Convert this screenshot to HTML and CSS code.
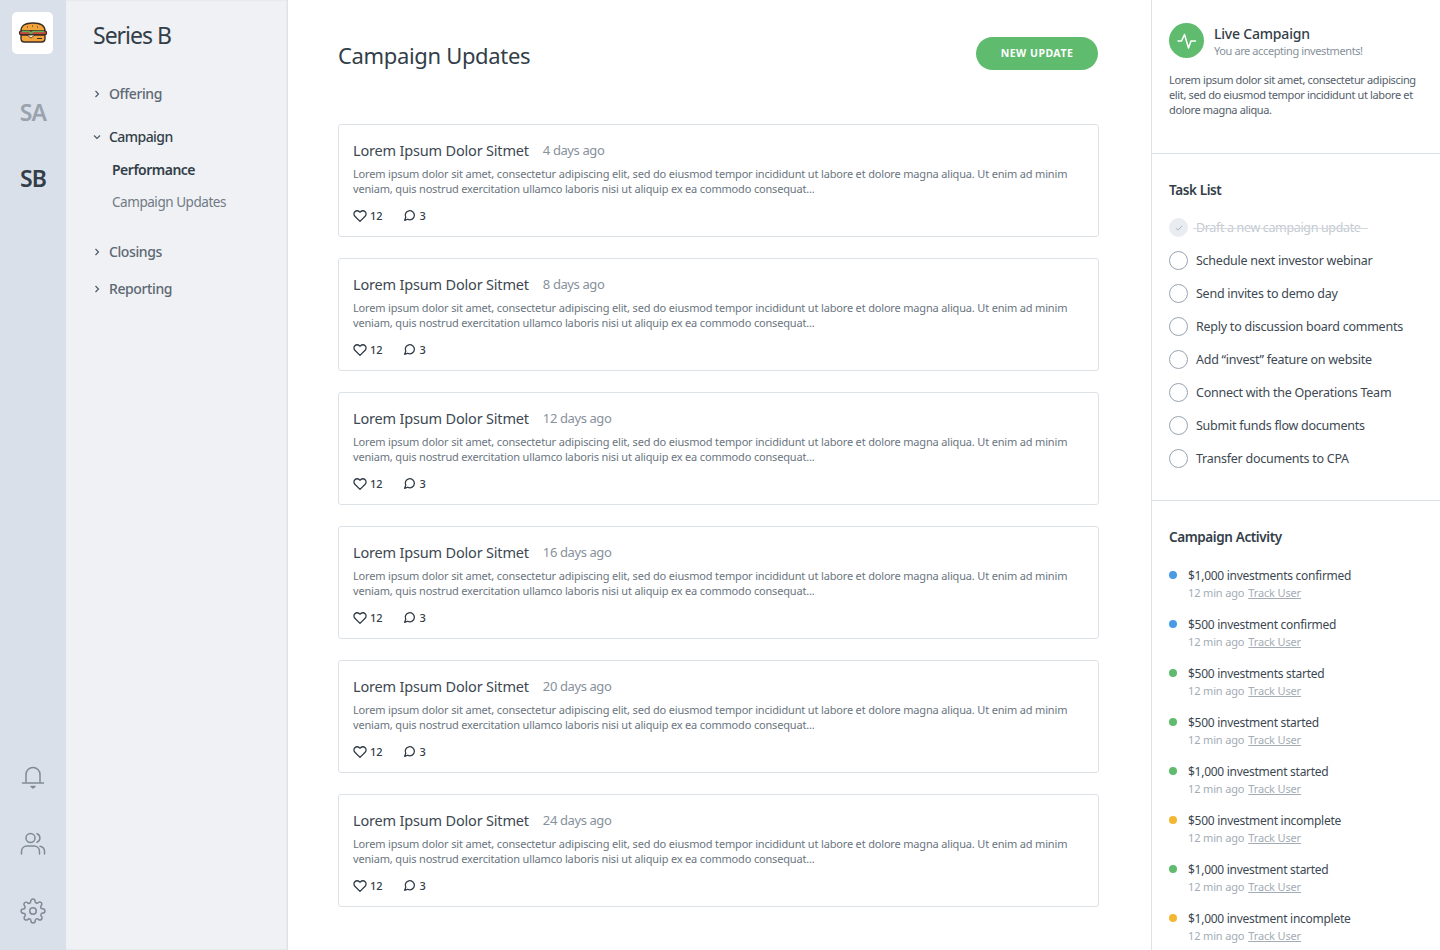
FILE: index.html
```html
<!DOCTYPE html>
<html lang="en">
<head>
  <meta charset="UTF-8">
  <title>Campaign Updates</title>
  <link rel="stylesheet" href="styles.css">
</head>
<body>
  <div class="app">
    <!-- company rail -->
    <nav class="rail">
      <div class="logo">
        <svg width="30" height="24" viewBox="0 0 30 24">
          <path d="M3 10C3 4 8 2 15 2s12 2 12 8z" fill="#f2a33a" stroke="#3d2c25" stroke-width="1.4"/>
          <rect x="1.5" y="10" width="27" height="3.6" rx="1.4" fill="#c8443c" stroke="#3d2c25" stroke-width="1.2"/>
          <path d="M4 10.5h7l2 2 2-2h11" fill="none" stroke="#5fae55" stroke-width="1.6"/>
          <path d="M3 14h24v3.5c0 2-1.500 3.500-3.500 3.500h-17C4.500 21 3 19.500 3 17.500z" fill="#f2a33a" stroke="#3d2c25" stroke-width="1.400"/>
          <path d="M9 14l4 3 4-3z" fill="#fff3d0" stroke="#3d2c25" stroke-width=".8"/>
          <path d="M19 17.500h5" stroke="#3d2c25" stroke-width="1"/>
          <path d="M9 6h1M14 5h1M19 6h1" stroke="#3d2c25" stroke-width="1"/>
        </svg>
      </div>
      <a class="rail-link muted">SA</a>
      <a class="rail-link">SB</a>
      <div class="rail-icons">
        <svg width="26" height="26" viewBox="0 0 26 26" fill="none" stroke="#7f8a96" stroke-width="1.500" stroke-linecap="round" stroke-linejoin="round">
          <path d="M6 18V10.500a7 7 0 0 1 14 0V18"/>
          <path d="M2.500 19h21"/>
          <path d="M11 22.500h4l-2 1.500z" fill="#7f8a96"/>
        </svg>
        <svg width="26" height="26" viewBox="0 0 26 26" fill="none" stroke="#7f8a96" stroke-width="1.500" stroke-linecap="round" stroke-linejoin="round">
          <circle cx="10.500" cy="7" r="4.500"/>
          <path d="M1.500 23v-2.500c0-3.500 2.500-5.500 5.500-5.500h7c3 0 5.500 2 5.500 5.500V23"/>
          <path d="M17 2.800a4.500 4.500 0 0 1 0 8.400"/>
          <path d="M20 15.300c2.800.6 4.500 2.500 4.500 5.200V23"/>
        </svg>
        <svg width="26" height="26" viewBox="0 0 24 24" fill="none" stroke="#7f8a96" stroke-width="1.400" stroke-linecap="round" stroke-linejoin="round">
          <circle cx="12" cy="12" r="3"/>
          <path d="M19.400 15a1.650 1.650 0 0 0 .33 1.820l.06.06a2 2 0 1 1-2.830 2.830l-.06-.06a1.650 1.650 0 0 0-2.800 1.170V21a2 2 0 0 1-4 0v-.09a1.650 1.650 0 0 0-2.800-1.170l-.06.06a2 2 0 1 1-2.830-2.830l.06-.06a1.650 1.650 0 0 0-1.170-2.800H3a2 2 0 0 1 0-4h.09a1.650 1.650 0 0 0 1.170-2.800l-.06-.06a2 2 0 1 1 2.830-2.830l.06.06a1.650 1.650 0 0 0 2.800-1.170V3a2 2 0 0 1 4 0v.09a1.650 1.650 0 0 0 2.800 1.170l.06-.06a2 2 0 1 1 2.830 2.830l-.06.06a1.650 1.650 0 0 0 1.170 2.800H21a2 2 0 0 1 0 4h-.09a1.650 1.650 0 0 0-1.510 1.110z"/>
        </svg>
      </div>
    </nav>

    <!-- section nav -->
    <aside class="sidenav">
      <h2 class="sidenav-title">Series B</h2>
      <div class="nav-item nav-offering"><svg class="chev" viewBox="0 0 8 8"><path d="M2.500 1l3 3-3 3"/></svg>Offering</div>
      <div class="nav-item nav-campaign active"><svg class="chev" viewBox="0 0 8 8"><path d="M1 2.500l3 3 3-3"/></svg>Campaign</div>
      <div class="nav-sub current">Performance</div>
      <div class="nav-sub">Campaign Updates</div>
      <div class="nav-item nav-closings"><svg class="chev" viewBox="0 0 8 8"><path d="M2.500 1l3 3-3 3"/></svg>Closings</div>
      <div class="nav-item nav-reporting"><svg class="chev" viewBox="0 0 8 8"><path d="M2.500 1l3 3-3 3"/></svg>Reporting</div>
    </aside>

    <main class="content">
      <header class="content-head">
        <h1>Campaign Updates</h1>
        <button class="new-btn">NEW UPDATE</button>
      </header>
      <div class="updates" id="updates"></div>
    </main>

    <aside class="panel">
      <section class="live">
        <div class="live-head">
          <div class="live-icon">
            <svg width="22" height="22" viewBox="0 0 22 22" fill="none" stroke="#fff" stroke-width="1.500" stroke-linecap="round" stroke-linejoin="round"><path d="M2 11h3.500l3-6.500 4 13.500 2.500-7h4.500"/></svg>
          </div>
          <div>
            <div class="live-title">Live Campaign</div>
            <div class="live-sub">You are accepting investments!</div>
          </div>
        </div>
        <p class="live-text">Lorem ipsum dolor sit amet, consectetur adipiscing elit, sed do eiusmod tempor incididunt ut labore et dolore magna aliqua.</p>
      </section>
      <section class="tasks">
        <h3>Task List</h3>
        <ul class="task-list" id="tasks"></ul>
      </section>
      <section class="activity">
        <h3>Campaign Activity</h3>
        <ul class="activity-list" id="activity"></ul>
      </section>
    </aside>
  </div>

  <script>
    const heart = '<svg width="14" height="14" viewBox="0 0 24 24" fill="none" stroke="#2f3a45" stroke-width="2.200" stroke-linejoin="round"><path d="M20.800 4.600a5.500 5.500 0 0 0-7.800 0L12 5.700l-1-1.100a5.500 5.500 0 0 0-7.800 7.800L12 21.200l8.800-8.800a5.500 5.500 0 0 0 0-7.800z"/></svg>';
    const bubble = '<svg class="bubble" width="13" height="13" viewBox="0 0 24 24" fill="none" stroke="#2f3a45" stroke-width="2.400" stroke-linejoin="round"><path d="M21 11.500a8.400 8.400 0 0 1-12.300 7.400L3 21l2.100-5.700A8.400 8.400 0 1 1 21 11.500z"/></svg>';

    const updates = document.getElementById('updates');
    [4, 8, 12, 16, 20, 24].forEach(days => {
      updates.innerHTML += `
        <article class="card">
          <div class="card-head"><span class="card-title">Lorem Ipsum Dolor Sitmet</span><span class="card-age">${days} days ago</span></div>
          <p class="card-text">Lorem ipsum dolor sit amet, consectetur adipiscing elit, sed do eiusmod tempor incididunt ut labore et dolore magna aliqua. Ut enim ad minim veniam, quis nostrud exercitation ullamco laboris nisi ut aliquip ex ea commodo consequat...</p>
          <div class="card-meta"><span class="meta">${heart}12</span><span class="meta">${bubble}3</span></div>
        </article>`;
    });

    const tasks = document.getElementById('tasks');
    tasks.innerHTML = '<li class="task done"><span class="check"><svg width="10" height="10" viewBox="0 0 10 10" fill="none" stroke="#a9b4c0" stroke-width="1"><path d="M2 5.200l2 2 4-4.400"/></svg></span><span class="task-label">Draft a new campaign update</span></li>';
    ['Schedule next investor webinar', 'Send invites to demo day', 'Reply to discussion board comments',
     'Add “invest” feature on website', 'Connect with the Operations Team', 'Submit funds flow documents',
     'Transfer documents to CPA'].forEach(t => {
      tasks.innerHTML += `<li class="task"><span class="check"></span><span class="task-label">${t}</span></li>`;
    });

    const activity = document.getElementById('activity');
    [['$1,000 investments confirmed', 'blue'], ['$500 investment confirmed', 'blue'], ['$500 investments started', 'green'],
     ['$500 investment started', 'green'], ['$1,000 investment started', 'green'], ['$500 investment incomplete', 'yellow'],
     ['$1,000 investment started', 'green'], ['$1,000 investment incomplete', 'yellow']].forEach(([t, c]) => {
      activity.innerHTML += `<li class="act"><span class="dot ${c}"></span><div><div class="act-title">${t}</div><div class="act-meta">12 min ago<a>Track User</a></div></div></li>`;
    });
  </script>
</body>
</html>
```
FILE: styles.css
```css
html, body {
  margin: 0;
  padding: 0;
  height: 950px;
  overflow: hidden;
}
body {
  font-family: 'Noto Sans', sans-serif;
  color: #333e48;
  background: #fff;
}
h1, h2, h3, p, ul {
  margin: 0;
  padding: 0;
}
ul {
  list-style: none;
}
.app {
  display: flex;
  height: 950px;
}

/* Company rail */
.rail {
  width: 66px;
  flex: none;
  background: #d9e0e9;
  display: flex;
  flex-direction: column;
  align-items: center;
  padding-top: 12px;
  box-sizing: border-box;
}
.logo {
  width: 41px;
  height: 42px;
  background: #fff;
  border-radius: 5px;
  display: flex;
  align-items: center;
  justify-content: center;
  margin: 0 1px 42px 0;
}
.rail-link {
  font-size: 23px;
  font-weight: 600;
  line-height: 32px;
  height: 66px;
  letter-spacing: -0.9px;
  color: #333e48;
}
.rail-link.muted {
  color: #99a2ad;
}
.rail-icons {
  margin-top: auto;
  display: flex;
  flex-direction: column;
  gap: 41px;
  padding-bottom: 26px;
}
.rail-icons svg {
  display: block;
}

/* Section nav */
.sidenav {
  width: 222px;
  flex: none;
  background: #eff1f4;
  box-sizing: border-box;
  padding: 19px 0 0 27px;
  box-shadow: inset -1px 0 2px rgba(120, 130, 145, 0.18);
}
.sidenav-title {
  font-size: 23px;
  font-weight: 400;
  line-height: 32px;
  letter-spacing: -1px;
  color: #333e48;
  margin-bottom: 33px;
}
.nav-item {
  display: flex;
  align-items: center;
  font-size: 14px;
  font-weight: 500;
  line-height: 20px;
  color: #5d6873;
  letter-spacing: -0.4px;
}
.nav-item.active {
  color: #333e48;
  letter-spacing: -0.55px;
}
.chev {
  width: 8px;
  height: 8px;
  margin-right: 8px;
  fill: none;
  stroke: #4a5560;
  stroke-width: 1.100;
}
.nav-campaign {
  margin-top: 23px;
}
.nav-sub {
  margin: 12px 0 0 19px;
  font-size: 13.500px;
  line-height: 20px;
  letter-spacing: -0.45px;
  color: #6f7a85;
}
.nav-sub.current {
  margin-top: 13px;
  font-size: 14px;
  font-weight: 600;
  letter-spacing: -0.5px;
  color: #333e48;
}
.nav-closings {
  margin-top: 30px;
}
.nav-reporting {
  margin-top: 17px;
}

/* Main column */
.content {
  width: 863px;
  flex: none;
  box-sizing: border-box;
  padding: 37px 52px 0 50px;
}
.content-head {
  display: flex;
  justify-content: space-between;
  align-items: flex-start;
  height: 87px;
}
.content-head h1 {
  font-size: 22px;
  font-weight: 400;
  line-height: 36px;
  letter-spacing: -0.34px;
  color: #333e48;
}
.new-btn {
  width: 122px;
  height: 33px;
  margin-right: 1px;
  padding: 0 0 2px;
  border: none;
  border-radius: 17px;
  background: #5fbb6e;
  color: #fff;
  font-family: inherit;
  font-size: 10.500px;
  font-weight: 700;
  letter-spacing: 0.5px;
}
.updates {
  display: flex;
  flex-direction: column;
  gap: 21px;
}
.card {
  height: 113px;
  box-sizing: border-box;
  border: 1px solid #dde2e7;
  border-radius: 3px;
  padding: 13px 14px 0;
}
.card-head {
  display: flex;
  align-items: center;
  gap: 14px;
  line-height: 24px;
}
.card-title {
  font-size: 14.500px;
  letter-spacing: -0.18px;
  color: #3d4852;
}
.card-age {
  font-size: 13px;
  letter-spacing: -0.4px;
  color: #87919b;
}
.card-text {
  font-size: 11px;
  line-height: 15px;
  letter-spacing: -0.17px;
  color: #6b7580;
  margin-top: 4px;
}
.card-meta {
  display: flex;
  gap: 20px;
  margin-top: 12px;
}
.meta {
  display: flex;
  align-items: center;
  gap: 3px;
  font-size: 11px;
  font-weight: 500;
  line-height: 15px;
  color: #333e48;
}
.bubble {
  margin-right: 1px;
}

/* Right panel */
.panel {
  width: 289px;
  flex: none;
  border-left: 1px solid #dde2e7;
  box-sizing: border-box;
  overflow: hidden;
}
.panel section {
  border-bottom: 1px solid #dde2e7;
  padding: 0 17px;
}
.panel h3 {
  font-size: 13.500px;
  font-weight: 600;
  line-height: 20px;
  letter-spacing: -0.39px;
  color: #333e48;
}
.live {
  height: 154px;
  box-sizing: border-box;
  padding-top: 23px !important;
}
.live-head {
  display: flex;
  gap: 10px;
}
.live-icon {
  width: 35px;
  height: 35px;
  border-radius: 50%;
  background: #5fbb6e;
  display: flex;
  align-items: center;
  justify-content: center;
}
.live-title {
  padding-top: 1px;
  font-size: 14px;
  font-weight: 500;
  line-height: 19px;
  letter-spacing: -0.2px;
}
.live-sub {
  font-size: 11px;
  line-height: 15px;
  letter-spacing: -0.4px;
  color: #87919b;
}
.live-text {
  font-size: 11px;
  line-height: 15px;
  letter-spacing: -0.36px;
  color: #55606b;
  margin-top: 14px;
}
.tasks {
  height: 347px;
  box-sizing: border-box;
  padding-top: 26px !important;
}
.task-list {
  margin-top: 11px;
}
.task {
  display: flex;
  align-items: center;
  height: 33px;
  font-size: 12.500px;
  letter-spacing: -0.25px;
  color: #3d4852;
}
.check {
  width: 19px;
  height: 19px;
  box-sizing: border-box;
  border: 1px solid #98a3b0;
  border-radius: 50%;
  margin-right: 8px;
  flex: none;
  display: flex;
  align-items: center;
  justify-content: center;
}
.task.done .check {
  border-color: #e9edf2;
  background: #e9edf2;
}
.task.done .task-label {
  position: relative;
  color: #c3cad1;
  letter-spacing: -0.35px;
}
/* strike runs a little past the text */
.task.done .task-label::after {
  content: "";
  position: absolute;
  left: -3px;
  right: -7px;
  top: 50%;
  height: 1px;
  background: #d3d9df;
}
.activity {
  border-bottom: none !important;
  padding-top: 26px !important;
}
.activity-list {
  margin-top: 20px;
}
.act {
  display: flex;
  height: 49px;
  font-size: 12px;
  letter-spacing: -0.27px;
}
.dot {
  width: 8px;
  height: 8px;
  border-radius: 50%;
  margin: 4px 11px 0 0;
  flex: none;
}
.dot.blue { background: #4b9be4; }
.dot.green { background: #5fbb6e; }
.dot.yellow { background: #f5b731; }
.act-title {
  line-height: 18px;
  color: #3d4852;
}
.act-meta {
  margin-top: -1px;
  font-size: 11px;
  line-height: 18px;
  letter-spacing: -0.15px;
  color: #a3acb5;
}
.act-meta a {
  margin-left: 4px;
  text-decoration: underline;
}
```
